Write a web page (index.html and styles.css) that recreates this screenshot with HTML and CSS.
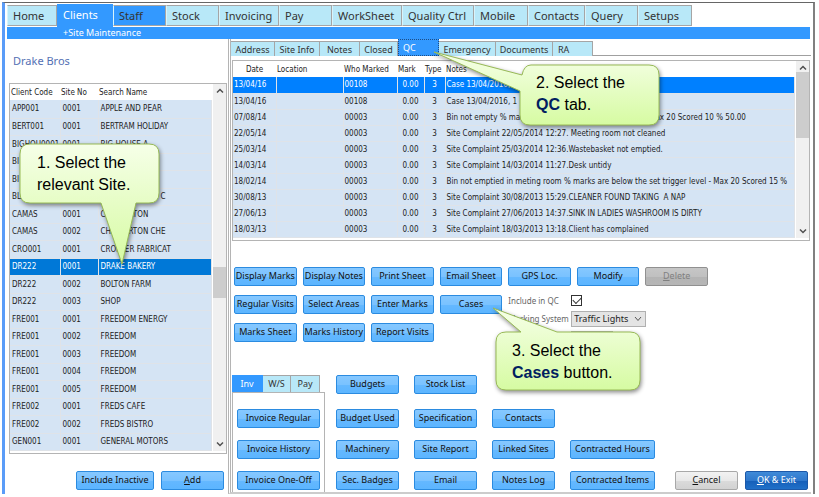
FILE: index.html
```
<!DOCTYPE html>
<html lang="en">
<head>
  <meta charset="UTF-8" />
  <meta name="viewport" content="width=device-width, initial-scale=1.0" />
  <title>Site Maintenance</title>
  <link rel="stylesheet" href="styles.css">
</head>
<body>

  <div class="app">
    <nav class="menu">
      <a href="#home">Home</a>
      <a href="#clients" class="active">Clients</a>
      <a href="#staff" class="hover">Staff</a>
      <a href="#stock">Stock</a>
      <a href="#invoicing">Invoicing</a>
      <a href="#pay">Pay</a>
      <a href="#worksheet">WorkSheet</a>
      <a href="#quality">Quality Ctrl</a>
      <a href="#mobile">Mobile</a>
      <a href="#contacts">Contacts</a>
      <a href="#query">Query</a>
      <a href="#setups">Setups</a>
    </nav>
    <div class="submenu"><a href="#site">+Site Maintenance</a></div>

    <div class="main">
      <section class="sites">
        <h1>Drake Bros</h1>
        <div class="list-box site-list">
          <table>
            <colgroup><col class="c-code"><col class="c-no"><col></colgroup>
            <thead>
              <tr><th>Client Code</th><th>Site No</th><th>Search Name</th></tr>
            </thead>
            <tbody>
              <tr><td>APP001</td><td>0001</td><td>APPLE AND PEAR</td></tr>
              <tr><td>BERT001</td><td>0001</td><td>BERTRAM HOLIDAY</td></tr>
              <tr><td>BIGHOU0001</td><td>0001</td><td>BIG HOUSE A</td></tr>
              <tr><td>BI</td><td></td><td></td></tr>
              <tr><td>BI</td><td></td><td></td></tr>
              <tr><td>BL</td><td></td><td class="tail-end">C</td></tr>
              <tr><td>CAMAS</td><td>0001</td><td>CHATTERTON</td></tr>
              <tr><td>CAMAS</td><td>0002</td><td>CHATTERTON CHE</td></tr>
              <tr><td>CRO001</td><td>0001</td><td>CROPPER FABRICAT</td></tr>
              <tr class="selected"><td>DR222</td><td>0001</td><td>DRAKE BAKERY</td></tr>
              <tr><td>DR222</td><td>0002</td><td>BOLTON FARM</td></tr>
              <tr><td>DR222</td><td>0003</td><td>SHOP</td></tr>
              <tr><td>FRE001</td><td>0001</td><td>FREEDOM ENERGY</td></tr>
              <tr><td>FRE001</td><td>0002</td><td>FREEDOM</td></tr>
              <tr><td>FRE001</td><td>0003</td><td>FREEDOM</td></tr>
              <tr><td>FRE001</td><td>0004</td><td>FREEDOM</td></tr>
              <tr><td>FRE001</td><td>0005</td><td>FREEDOM</td></tr>
              <tr><td>FRE002</td><td>0001</td><td>FREDS CAFE</td></tr>
              <tr><td>FRE002</td><td>0002</td><td>FREDS BISTRO</td></tr>
              <tr><td>GEN001</td><td>0001</td><td>GENERAL MOTORS</td></tr>
            </tbody>
          </table>
          <div class="scrollbar">
            <svg viewBox="0 0 8 6"><path d="M1 4.5 4 1.5 7 4.5" /></svg>
            <div class="track"><div class="thumb"></div></div>
            <svg viewBox="0 0 8 6"><path d="M1 1.5 4 4.5 7 1.5" /></svg>
          </div>
        </div>
        <div class="site-actions">
          <button type="button" class="btn">Include Inactive</button>
          <button type="button" class="btn"><u>A</u>dd</button>
        </div>
      </section>

      <section class="detail">
        <div class="tabs">
          <button type="button">Address</button>
          <button type="button">Site Info</button>
          <button type="button">Notes</button>
          <button type="button">Closed</button>
          <button type="button" class="active">QC</button>
          <button type="button">Emergency</button>
          <button type="button">Documents</button>
          <button type="button">RA</button>
        </div>

        <div class="list-box qc-list">
          <table>
            <colgroup><col class="c-date"><col class="c-loc"><col class="c-who"><col class="c-mark"><col class="c-type"><col></colgroup>
            <thead>
              <tr><th>Date</th><th>Location</th><th>Who Marked</th><th>Mark</th><th>Type</th><th>Notes</th></tr>
            </thead>
            <tbody>
              <tr class="selected"><td>13/04/16</td><td></td><td>00108</td><td>0.00</td><td>3</td><td>Case 13/04/2016, 1</td></tr>
              <tr><td>13/04/16</td><td></td><td>00108</td><td>0.00</td><td>3</td><td>Case 13/04/2016, 1</td></tr>
              <tr><td>07/08/14</td><td></td><td>00003</td><td>0.00</td><td>3</td><td>Bin not empty % marks are below the set trigger level - Max 20 Scored 10 % 50.00</td></tr>
              <tr><td>22/05/14</td><td></td><td>00003</td><td>0.00</td><td>3</td><td>Site Complaint 22/05/2014 12:27. Meeting room not cleaned</td></tr>
              <tr><td>25/03/14</td><td></td><td>00003</td><td>0.00</td><td>3</td><td>Site Complaint 25/03/2014 12:36.Wastebasket not emptied.</td></tr>
              <tr><td>14/03/14</td><td></td><td>00003</td><td>0.00</td><td>3</td><td>Site Complaint 14/03/2014 11:27.Desk untidy</td></tr>
              <tr><td>18/02/14</td><td></td><td>00003</td><td>0.00</td><td>3</td><td>Bin not emptied in meting room % marks are below the set trigger level - Max 20 Scored 15 %</td></tr>
              <tr><td>30/08/13</td><td></td><td>00003</td><td>0.00</td><td>3</td><td>Site Complaint 30/08/2013 15:29.CLEANER FOUND TAKING&nbsp; A NAP</td></tr>
              <tr><td>27/06/13</td><td></td><td>00003</td><td>0.00</td><td>3</td><td>Site Complaint 27/06/2013 14:37.SINK IN LADIES WASHROOM IS DIRTY</td></tr>
              <tr><td>18/03/13</td><td></td><td>00003</td><td>0.00</td><td>3</td><td>Site Complaint 18/03/2013 13:18.Client has complained</td></tr>
            </tbody>
          </table>
          <div class="scrollbar">
            <svg viewBox="0 0 8 6"><path d="M1 4.5 4 1.5 7 4.5" /></svg>
            <div class="track"><div class="thumb"></div></div>
            <svg viewBox="0 0 8 6"><path d="M1 1.5 4 4.5 7 1.5" /></svg>
          </div>
        </div>

        <div class="qc-actions">
          <button type="button" class="btn">Display Marks</button>
          <button type="button" class="btn">Display Notes</button>
          <button type="button" class="btn">Print Sheet</button>
          <button type="button" class="btn">Email Sheet</button>
          <button type="button" class="btn">GPS Loc.</button>
          <button type="button" class="btn">Modify</button>
          <button type="button" class="btn" disabled><u>D</u>elete</button>
          <button type="button" class="btn">Regular Visits</button>
          <button type="button" class="btn">Select Areas</button>
          <button type="button" class="btn">Enter Marks</button>
          <button type="button" class="btn">Cases</button>
          <form class="qc-options">
            <label for="include-qc">Include in QC</label>
            <input type="checkbox" id="include-qc" checked />
            <label for="marking">Marking System</label>
            <select id="marking"><option>Traffic Lights</option></select>
            <input type="text" id="marking-value" aria-label="Marking value" />
          </form>
          <button type="button" class="btn">Marks Sheet</button>
          <button type="button" class="btn">Marks History</button>
          <button type="button" class="btn">Report Visits</button>
        </div>

        <div class="bottom">
          <div class="invoices">
            <div class="tabs small">
              <button type="button" class="active">Inv</button>
              <button type="button">W/S</button>
              <button type="button">Pay</button>
            </div>
            <div class="invoice-panel">
              <button type="button" class="btn">Invoice Regular</button>
              <button type="button" class="btn">Invoice History</button>
              <button type="button" class="btn">Invoice One-Off</button>
            </div>
          </div>
          <div class="links">
            <button type="button" class="btn first">Budgets</button>
            <button type="button" class="btn">Stock List</button>
            <button type="button" class="btn first">Budget Used</button>
            <button type="button" class="btn">Specification</button>
            <button type="button" class="btn">Contacts</button>
            <button type="button" class="btn first">Machinery</button>
            <button type="button" class="btn">Site Report</button>
            <button type="button" class="btn">Linked Sites</button>
            <button type="button" class="btn">Contracted Hours</button>
            <button type="button" class="btn first">Sec. Badges</button>
            <button type="button" class="btn">Email</button>
            <button type="button" class="btn">Notes Log</button>
            <button type="button" class="btn">Contracted Items</button>
          </div>
          <div class="confirm">
            <button type="button" class="btn plain"><u>C</u>ancel</button>
            <button type="button" class="btn primary"><u>O</u>K &amp; Exit</button>
          </div>
        </div>
      </section>
    </div>

    <div class="callout step-1">
      <svg width="142" height="124" viewBox="0 0 142 124">
        <defs>
          <linearGradient id="green" x1="0" y1="0" x2="0" y2="1">
            <stop offset="0" stop-color="#f6ffe8" />
            <stop offset="1" stop-color="#d6fba2" />
          </linearGradient>
        </defs>
        <path fill="url(#green)" d="M11 1H130Q140 1 140 11V50Q140 60 130 60H117L103 121 82 60H11Q1 60 1 50V11Q1 1 11 1Z" />
      </svg>
      <p>1. Select the<br>relevant Site.</p>
    </div>
    <div class="callout step-2">
      <svg width="228" height="76" viewBox="0 0 228 76">
        <path fill="url(#green)" d="M98 14H216Q226 14 226 24V64Q226 74 216 74H97Q87 74 87 64V40L1 1 89 24Q91 14 98 14Z" />
      </svg>
      <p>2. Select the<br><b>QC</b> tab.</p>
    </div>
    <div class="callout step-3">
      <svg width="150" height="86" viewBox="0 0 150 86">
        <path fill="url(#green)" d="M14 25H29L1 1 65 25H138Q148 25 148 35V73Q148 83 138 83H14Q4 83 4 73V35Q4 25 14 25Z" />
      </svg>
      <p>3. Select the<br><b>Cases</b> button.</p>
    </div>
  </div>

</body>
</html>
```
FILE: styles.css
```
* {
  box-sizing: border-box;
}

body {
  margin: 0;
  padding: 2px 4px 0 2px;
  font-family: "Noto Sans", "Segoe UI", sans-serif;
  font-size: 9px;
  color: #222;
  background: #fff;
}

.app {
  position: relative;
  border-top: 1px solid #666;
  border-left: 3px solid #5a9cf8;
  border-right: 2px solid #808080;
}

.menu {
  display: grid;
  grid-template-columns: 50px 56px 53px 53px 60px 53px 70px 72px 54px 57px 53px 54px;
  align-items: end;
  height: 24px;
  padding-left: 2px;
}

.menu a {
  height: 21px;
  margin-bottom: 1px;
  padding-left: 5px;
  border: 1px solid #a5a5a5;
  border-left-color: #d8f4fb;
  background: #b8e8f8;
  color: #333;
  font-size: 11px;
  line-height: 19px;
  text-decoration: none;
  white-space: nowrap;
}

.menu a.active {
  height: 23px;
  margin-bottom: 0;
  border-color: #3399ff;
  background: #3399ff;
  color: #fff;
}

.menu a.hover {
  background: #3399ff;
}

.submenu {
  height: 12px;
  margin: 0 3px 0 2px;
  padding-left: 56px;
  background: #3399ff;
  line-height: 12px;
}

.submenu a {
  color: #fff;
  text-decoration: none;
}

.main {
  display: flex;
}

.sites {
  flex: none;
  width: 223px;
  padding: 0 1px 0 4px;
}

.sites h1 {
  margin: 0;
  padding: 13px 0 13px 4px;
  color: #5470b4;
  font-size: 11px;
  font-weight: 400;
  line-height: 18px;
}

.list-box {
  display: flex;
  border: 1px solid #b4b4b4;
  background: #fff;
  font-family: "DejaVu Sans Condensed", Tahoma, sans-serif;
  font-size: 8px;
}

table {
  flex: 1;
  width: 100%;
  border-collapse: collapse;
  table-layout: fixed;
}

th,
td {
  height: 16px;
  padding: 0 1px;
  overflow: hidden;
  line-height: 15px;
  text-align: left;
  white-space: nowrap;
}

th {
  font-weight: 400;
}

td {
  border: 1px solid #dfe3e8;
  border-width: 0 1px 1px 0;
  background: #d5e4f4;
}

.site-list td {
  height: 17px;
  padding-left: 2px;
}

.site-list tr:nth-child(odd) td {
  height: 18px;
}

.site-list .selected td {
  background: #0078d7;
  color: #fff;
}

.site-list .tail-end {
  padding-left: 62px;
}

.c-code {
  width: 50px;
}

.c-no {
  width: 38px;
}

.scrollbar {
  display: flex;
  flex-direction: column;
  align-items: center;
  width: 13px;
  margin-left: 1px;
  padding: 4px 0;
  background: #f0f0f0;
}

.scrollbar svg {
  width: 8px;
  height: 6px;
  fill: none;
  stroke: #505050;
  stroke-width: 1.5;
}

.track {
  flex: 1;
  width: 100%;
}

.thumb {
  width: 100%;
  background: #cdcdcd;
}

.site-list {
  padding-bottom: 2px;
}

.site-list .thumb {
  height: 31px;
  margin-top: 173px;
}

.site-actions {
  display: grid;
  grid-template-columns: 78px 63px;
  justify-content: end;
  gap: 7px;
  padding: 17px 3px 0 0;
}

.btn {
  height: 19px;
  padding: 0;
  border: 1px solid #2b8be0;
  border-radius: 2px;
  background: linear-gradient(#86c8ff 0%, #7ac2ff 50%, #64b8ff 55%, #5cb5ff 100%);
  color: #111;
  font-family: inherit;
  font-size: 9px;
  line-height: 16px;
  white-space: nowrap;
}

.btn:disabled {
  border-color: #909090;
  background: linear-gradient(#c6c6c6 0%, #c0c0c0 50%, #b4b4b4 55%, #b6b6b6 100%);
  color: #808080;
}

.btn.plain {
  border-color: #a8a8a8;
  background: linear-gradient(#f2f2f2 0%, #e8e8e8 50%, #dadada 55%, #d2d2d2 100%);
}

.btn.primary {
  border-color: #1c58a8;
  background: linear-gradient(#3f8ad8 0%, #2f78cc 50%, #1660ba 55%, #2070c8 100%);
  color: #fff;
}

.detail {
  flex: 1;
  min-width: 0;
  margin-right: 2px;
  border: 3px double #b4b4b4;
  border-width: 0 0 2px 3px;
  border-bottom-style: solid;
  border-bottom-color: #ccc;
}

.tabs {
  display: grid;
  grid-template-columns: 44px 45px 40px 38px 41px 57px 57px 40px;
  align-items: end;
  height: 17px;
  border-bottom: 1px solid #a0a0a0;
}

.tabs button {
  height: 15px;
  padding: 0;
  border: 1px solid #a5a5a5;
  border-width: 1px 1px 0 0;
  background: #b8e8f8;
  color: #333;
  font-family: inherit;
  font-size: 9px;
  line-height: 13px;
}

.tabs .active {
  height: 17px;
  border-color: #3399ff;
  background: #3399ff;
  color: #fff;
}

.tabs button.active:nth-child(5) {
  border: 1px dotted #1c4e88;
  padding-left: 4px;
  text-align: left;
}

.tabs button:last-child:nth-child(8) {
  padding-left: 5px;
  text-align: left;
}

.qc-list {
  margin: 4px 1px 0;
  padding-bottom: 2px;
}

.c-date {
  width: 43px;
}

.c-loc {
  width: 67px;
}

.c-who {
  width: 54px;
}

.c-mark {
  width: 27px;
}

.c-type {
  width: 21px;
}

.qc-list th:first-child,
.qc-list td:nth-child(5) {
  text-align: center;
}

.qc-list td:nth-child(4) {
  padding-right: 5px;
  text-align: right;
}

.qc-list .selected td {
  background: #0080ff;
  color: #fff;
}

.qc-list .thumb {
  height: 66px;
  margin-top: 1px;
}

.qc-actions {
  display: grid;
  grid-template-columns: repeat(7, minmax(0, 1fr));
  gap: 9px 6px;
  width: 474px;
  margin: 26px 0 0 3px;
}

.qc-options {
  display: grid;
  grid-column: 5 / 8;
  grid-row: 2 / 4;
  grid-template-columns: 57px 75px;
  gap: 4px 6px;
  align-content: start;
  align-items: center;
  height: 47px;
  color: #666;
}

.qc-options label {
  font-size: 8px;
  line-height: 12px;
  white-space: nowrap;
}

.qc-options input[type="checkbox"] {
  display: grid;
  place-items: center;
  width: 11px;
  height: 11px;
  margin: 0;
  appearance: none;
  border: 1px solid #333;
}

.qc-options input[type="checkbox"]:checked::before {
  content: "";
  width: 7px;
  height: 4px;
  margin-bottom: 2px;
  border: 1px solid #333;
  border-width: 0 0 1px 1px;
  transform: rotate(-45deg);
}

.qc-options select {
  height: 16px;
  padding: 0 0 0 2px;
  appearance: none;
  border: 1px solid #b0b0b0;
  border-radius: 0;
  background: #e4e4e4 url("data:image/svg+xml,%3Csvg xmlns='http://www.w3.org/2000/svg' width='8' height='6'%3E%3Cpath d='M1 1 4 4.500 7 1' fill='none' stroke='%23555'/%3E%3C/svg%3E") right 3px center no-repeat;
  color: #222;
  font-family: inherit;
  font-size: 9px;
}

.qc-options input[type="text"] {
  grid-column: 2;
  width: 42px;
  height: 12px;
  border: 1px solid #b0b0b0;
}

.bottom {
  display: flex;
  margin-top: 33px;
  padding-left: 1px;
}

.tabs.small {
  grid-template-columns: 31px 28px 29px;
  border: 0;
}

.tabs.small button {
  height: 17px;
}

.invoice-panel {
  display: grid;
  gap: 12px;
  width: 93px;
  padding: 16px 4px 2px;
  border: 1px solid #b4b4b4;
  border-bottom: 0;
}

.links {
  display: grid;
  grid-template-columns: 63px 63px 63px 85px;
  grid-template-rows: 22px 19px 19px 19px;
  gap: 12px 15px;
  align-content: end;
  padding: 0 0 2px 11px;
}

.links .first {
  grid-column: 1;
}

.confirm {
  display: grid;
  grid-template-columns: 63px 63px;
  gap: 7px;
  align-content: end;
  justify-content: end;
  flex: 1;
  padding: 0 3px 2px 0;
}

/* step callouts float over the window */
.callout {
  position: absolute;
}

.callout svg {
  display: block;
  overflow: visible;
  stroke: #98ba56;
  filter: drop-shadow(1px 2px 2px rgba(0, 0, 0, 0.45));
}

.callout p {
  position: absolute;
  margin: 0;
  color: #000;
  font-family: "Liberation Sans", Arial, sans-serif;
  font-size: 16px;
  line-height: 22px;
  white-space: nowrap;
}

.callout b {
  color: #002060;
}

.step-1 {
  top: 140px;
  left: 14px;
}

.step-1 p {
  top: 9px;
  left: 18px;
}

.step-2 {
  top: 48px;
  left: 428px;
}

.step-2 p {
  top: 21px;
  left: 103px;
}

.step-3 {
  top: 304px;
  left: 487px;
}

.step-3 p {
  top: 33px;
  left: 20px;
}
```
